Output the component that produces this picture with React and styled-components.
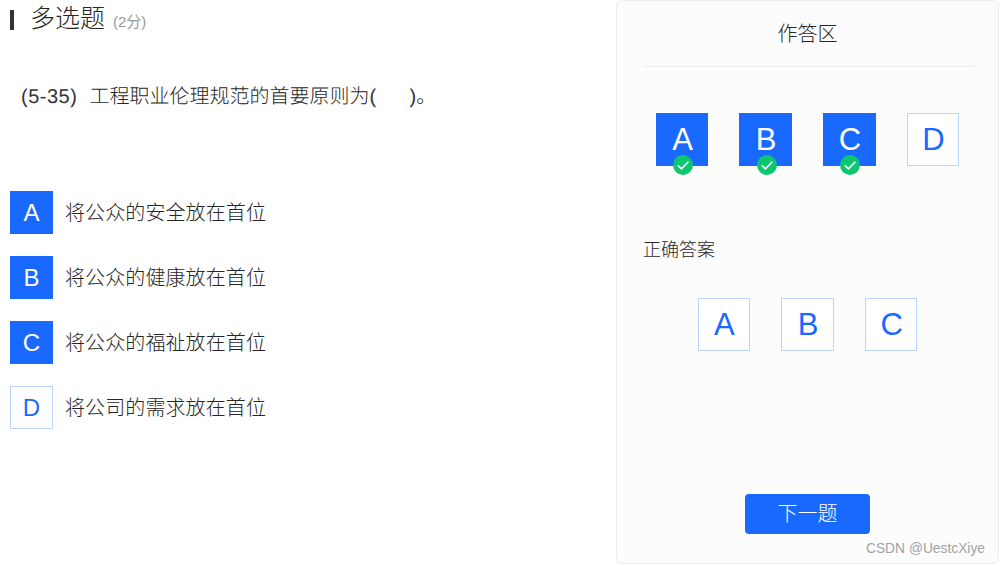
import React from "react"
import styled, { createGlobalStyle } from "styled-components"

const BLUE = "#1a69ff"
const INK = "#262626"

const GlobalStyle = createGlobalStyle`
  html, body {
    margin: 0;
    padding: 0;
    background: #fff;
    font-family: "Liberation Sans", "Noto Sans CJK SC", sans-serif;
    color: #333;
  }
`

const Page = styled.div`
  position: relative;
  display: flex;
  width: 1000px;
  height: 566px;
  overflow: hidden;
`

const Main = styled.main`
  width: 616px;
  flex: none;
`

const Header = styled.div`
  position: relative;
  display: flex;
  align-items: baseline;
  height: 36px;
  margin-left: 10px;
  padding-left: 20px;

  &::before {
    content: "";
    position: absolute;
    left: 0;
    top: 10px;
    width: 4px;
    height: 20px;
    background: #333;
  }
`

const Title = styled.h2`
  margin: 0;
  font-size: 25px;
  line-height: 36px;
  font-weight: 300;
  color: ${INK};
`

const Score = styled.span`
  margin-left: 8px;
  font-size: 15px;
  color: #999;
`

const Question = styled.p`
  margin: 46px 0 0 21px;
  font-size: 20px;
  line-height: 30px;
  color: #333;
  white-space: pre;
  text-rendering: geometricPrecision;
`

const QuestionNo = styled.span`
  letter-spacing: 0.5px;
`

const QuestionText = styled.span`
  font-weight: 300;
  color: ${INK};
`

const Options = styled.div`
  display: flex;
  flex-direction: column;
  gap: 22px;
  margin: 79px 0 0 10px;
`

const Option = styled.div`
  display: flex;
  align-items: center;
  gap: 13px;
  font-size: 20px;
`

const OptionText = styled.span`
  margin: -2px 0 0 -1px;
  letter-spacing: 0.1px;
  font-weight: 300;
  color: ${INK};
`

const Letter = styled.div`
  box-sizing: border-box;
  display: flex;
  align-items: center;
  justify-content: center;
  flex: none;
  position: relative;
  width: ${(p) => p.$size}px;
  height: ${(p) => p.$size}px;
  padding: ${(p) => (p.$size > 50 ? "1px 0 0 1px" : "0")};
  font-size: ${(p) => (p.$size > 50 ? 31 : 24)}px;
  background: ${(p) => (p.$on ? BLUE : "#fff")};
  color: ${(p) => (p.$on ? "#fff" : BLUE)};
  border: 1px solid ${(p) => (p.$on ? BLUE : "#bcd4fb")};
`

const Panel = styled.aside`
  box-sizing: border-box;
  display: flex;
  flex-direction: column;
  width: 383px;
  height: 564px;
  padding: 0 25px 29px;
  background: #fcfcfc;
  border: 1px solid #ececec;
  border-radius: 6px;
`

const PanelTitle = styled.div`
  height: 65px;
  margin: 0 -2px 0 1px;
  padding-right: 3px;
  line-height: 66px;
  text-align: center;
  font-size: 20px;
  font-weight: 300;
  color: ${INK};
  border-bottom: 1px solid #ececec;
`

const AnswerGrid = styled.div`
  display: grid;
  grid-template-columns: repeat(${(p) => p.$cols}, 83.7px);
  justify-content: center;
  justify-items: center;
  margin-top: ${(p) => p.$top}px;
`

const Check = styled.svg`
  position: absolute;
  left: 50%;
  bottom: -10px;
  width: 20px;
  height: 20px;
  margin-left: -9px;
`

const SubTitle = styled.div`
  margin: 72px 0 0 1px;
  font-size: 18px;
  line-height: 24px;
  font-weight: 300;
  color: ${INK};
`

const NextButton = styled.button`
  align-self: center;
  width: 125px;
  height: 40px;
  margin-top: auto;
  padding: 0 0 3px;
  border: 0;
  border-radius: 4px;
  background: ${BLUE};
  color: #fff;
  font-family: inherit;
  font-size: 20px;
  font-weight: 300;
`

const Watermark = styled.div`
  position: absolute;
  right: 15px;
  top: 541px;
  font-size: 13.8px;
  line-height: 16px;
  color: #a3a3a3;
`

const OPTIONS = [
  { key: "A", text: "将公众的安全放在首位", picked: true },
  { key: "B", text: "将公众的健康放在首位", picked: true },
  { key: "C", text: "将公众的福祉放在首位", picked: true },
  { key: "D", text: "将公司的需求放在首位", picked: false },
]

const CheckBadge = () => (
  <Check viewBox="0 0 20 20">
    <circle cx="10" cy="10" r="10" fill="#0cc76f" />
    <path d="M4.8 10.4l3.6 3.4L15.4 6.8" fill="none" stroke="#fff" strokeWidth="1.6" />
  </Check>
)

const App = () => (
  <Page>
    <GlobalStyle />
    <Main>
      <Header>
        <Title>多选题</Title>
        <Score>(2分)</Score>
      </Header>
      <Question>
        <QuestionNo>(5-35)  </QuestionNo>
        <QuestionText>工程职业伦理规范的首要原则为</QuestionText>(      )<QuestionText>。</QuestionText>
      </Question>
      <Options>
        {OPTIONS.map((o) => (
          <Option key={o.key}>
            <Letter $size={43} $on={o.picked}>{o.key}</Letter>
            <OptionText>{o.text}</OptionText>
          </Option>
        ))}
      </Options>
    </Main>
    <Panel>
      <PanelTitle>作答区</PanelTitle>
      <AnswerGrid $cols={4} $top={46}>
        {OPTIONS.map((o) => (
          <Letter key={o.key} $size={52.5} $on={o.picked}>
            {o.key}
            {o.picked && <CheckBadge />}
          </Letter>
        ))}
      </AnswerGrid>
      <SubTitle>正确答案</SubTitle>
      <AnswerGrid $cols={3} $top={36.5}>
        {OPTIONS.filter((o) => o.picked).map((o) => (
          <Letter key={o.key} $size={52.5}>{o.key}</Letter>
        ))}
      </AnswerGrid>
      <NextButton>下一题</NextButton>
    </Panel>
    <Watermark>CSDN @UestcXiye</Watermark>
  </Page>
)

export default App
